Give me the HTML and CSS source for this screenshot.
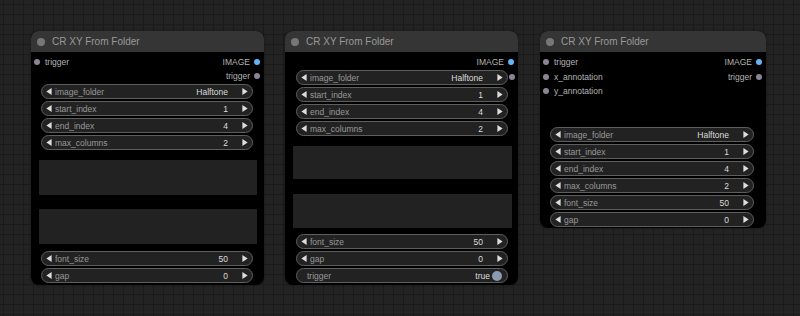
FILE: index.html
```html
<!DOCTYPE html>
<html>
<head>
<meta charset="utf-8">
<link rel="stylesheet" href="styles.css">
</head>
<body>
<div class="canvas">

  <div class="node n1">
    <div class="title"><span class="tdot"></span>CR XY From Folder</div>
    <div class="body">
      <div class="slots">
        <div class="slotrow"><span class="in"><span class="dot"></span>trigger</span><span class="out">IMAGE<span class="dot blue"></span></span></div>
        <div class="slotrow"><span class="in"></span><span class="out">trigger<span class="dot"></span></span></div>
      </div>
      <div class="widgets w1">
        <div class="w"><svg class="la" viewBox="0 0 6 8"><path d="M6 0 L0 4 L6 8 Z"/></svg><span class="lbl">image_folder</span><span class="val">Halftone</span><svg class="ra" viewBox="0 0 6 8"><path d="M0 0 L6 4 L0 8 Z"/></svg></div>
        <div class="w"><svg class="la" viewBox="0 0 6 8"><path d="M6 0 L0 4 L6 8 Z"/></svg><span class="lbl">start_index</span><span class="val">1</span><svg class="ra" viewBox="0 0 6 8"><path d="M0 0 L6 4 L0 8 Z"/></svg></div>
        <div class="w"><svg class="la" viewBox="0 0 6 8"><path d="M6 0 L0 4 L6 8 Z"/></svg><span class="lbl">end_index</span><span class="val">4</span><svg class="ra" viewBox="0 0 6 8"><path d="M0 0 L6 4 L0 8 Z"/></svg></div>
        <div class="w"><svg class="la" viewBox="0 0 6 8"><path d="M6 0 L0 4 L6 8 Z"/></svg><span class="lbl">max_columns</span><span class="val">2</span><svg class="ra" viewBox="0 0 6 8"><path d="M0 0 L6 4 L0 8 Z"/></svg></div>
      </div>
      <div class="ta ta1a"></div>
      <div class="ta ta1b"></div>
      <div class="widgets w1b">
        <div class="w"><svg class="la" viewBox="0 0 6 8"><path d="M6 0 L0 4 L6 8 Z"/></svg><span class="lbl">font_size</span><span class="val">50</span><svg class="ra" viewBox="0 0 6 8"><path d="M0 0 L6 4 L0 8 Z"/></svg></div>
        <div class="w"><svg class="la" viewBox="0 0 6 8"><path d="M6 0 L0 4 L6 8 Z"/></svg><span class="lbl">gap</span><span class="val">0</span><svg class="ra" viewBox="0 0 6 8"><path d="M0 0 L6 4 L0 8 Z"/></svg></div>
      </div>
    </div>
  </div>

  <div class="node n2">
    <div class="title"><span class="tdot"></span>CR XY From Folder</div>
    <div class="body">
      <div class="slots">
        <div class="slotrow"><span class="in"></span><span class="out">IMAGE<span class="dot blue"></span></span></div>
      </div>
      <div class="widgets w2">
        <div class="w"><svg class="la" viewBox="0 0 6 8"><path d="M6 0 L0 4 L6 8 Z"/></svg><span class="lbl">image_folder</span><span class="val">Halftone</span><svg class="ra" viewBox="0 0 6 8"><path d="M0 0 L6 4 L0 8 Z"/></svg><span class="dot sidedot"></span></div>
        <div class="w"><svg class="la" viewBox="0 0 6 8"><path d="M6 0 L0 4 L6 8 Z"/></svg><span class="lbl">start_index</span><span class="val">1</span><svg class="ra" viewBox="0 0 6 8"><path d="M0 0 L6 4 L0 8 Z"/></svg></div>
        <div class="w"><svg class="la" viewBox="0 0 6 8"><path d="M6 0 L0 4 L6 8 Z"/></svg><span class="lbl">end_index</span><span class="val">4</span><svg class="ra" viewBox="0 0 6 8"><path d="M0 0 L6 4 L0 8 Z"/></svg></div>
        <div class="w"><svg class="la" viewBox="0 0 6 8"><path d="M6 0 L0 4 L6 8 Z"/></svg><span class="lbl">max_columns</span><span class="val">2</span><svg class="ra" viewBox="0 0 6 8"><path d="M0 0 L6 4 L0 8 Z"/></svg></div>
      </div>
      <div class="ta ta2a"></div>
      <div class="ta ta2b"></div>
      <div class="widgets w2b">
        <div class="w"><svg class="la" viewBox="0 0 6 8"><path d="M6 0 L0 4 L6 8 Z"/></svg><span class="lbl">font_size</span><span class="val">50</span><svg class="ra" viewBox="0 0 6 8"><path d="M0 0 L6 4 L0 8 Z"/></svg></div>
        <div class="w"><svg class="la" viewBox="0 0 6 8"><path d="M6 0 L0 4 L6 8 Z"/></svg><span class="lbl">gap</span><span class="val">0</span><svg class="ra" viewBox="0 0 6 8"><path d="M0 0 L6 4 L0 8 Z"/></svg></div>
        <div class="w toggle"><span class="lbl">trigger</span><span class="val">true</span><span class="knob"></span></div>
      </div>
    </div>
  </div>

  <div class="node n3">
    <div class="title"><span class="tdot"></span>CR XY From Folder</div>
    <div class="body">
      <div class="slots">
        <div class="slotrow"><span class="in"><span class="dot"></span>trigger</span><span class="out">IMAGE<span class="dot blue"></span></span></div>
        <div class="slotrow r15"><span class="in"><span class="dot"></span>x_annotation</span><span class="out">trigger<span class="dot"></span></span></div>
        <div class="slotrow"><span class="in"><span class="dot"></span>y_annotation</span><span class="out"></span></div>
      </div>
      <div class="widgets w3">
        <div class="w"><svg class="la" viewBox="0 0 6 8"><path d="M6 0 L0 4 L6 8 Z"/></svg><span class="lbl">image_folder</span><span class="val">Halftone</span><svg class="ra" viewBox="0 0 6 8"><path d="M0 0 L6 4 L0 8 Z"/></svg></div>
        <div class="w"><svg class="la" viewBox="0 0 6 8"><path d="M6 0 L0 4 L6 8 Z"/></svg><span class="lbl">start_index</span><span class="val">1</span><svg class="ra" viewBox="0 0 6 8"><path d="M0 0 L6 4 L0 8 Z"/></svg></div>
        <div class="w"><svg class="la" viewBox="0 0 6 8"><path d="M6 0 L0 4 L6 8 Z"/></svg><span class="lbl">end_index</span><span class="val">4</span><svg class="ra" viewBox="0 0 6 8"><path d="M0 0 L6 4 L0 8 Z"/></svg></div>
        <div class="w"><svg class="la" viewBox="0 0 6 8"><path d="M6 0 L0 4 L6 8 Z"/></svg><span class="lbl">max_columns</span><span class="val">2</span><svg class="ra" viewBox="0 0 6 8"><path d="M0 0 L6 4 L0 8 Z"/></svg></div>
        <div class="w"><svg class="la" viewBox="0 0 6 8"><path d="M6 0 L0 4 L6 8 Z"/></svg><span class="lbl">font_size</span><span class="val">50</span><svg class="ra" viewBox="0 0 6 8"><path d="M0 0 L6 4 L0 8 Z"/></svg></div>
        <div class="w"><svg class="la" viewBox="0 0 6 8"><path d="M6 0 L0 4 L6 8 Z"/></svg><span class="lbl">gap</span><span class="val">0</span><svg class="ra" viewBox="0 0 6 8"><path d="M0 0 L6 4 L0 8 Z"/></svg></div>
      </div>
    </div>
  </div>

</div>
</body>
</html>
```

FILE: styles.css
```css
html, body {
  margin: 0;
  padding: 0;
  width: 800px;
  height: 316px;
  overflow: hidden;
}
body {
  background-color: #222222;
  font-family: "Liberation Sans", Arial, sans-serif;
}
.canvas {
  position: relative;
  width: 800px;
  height: 316px;
  background-color: #232323;
  background-image:
    linear-gradient(to right, #1b1b1b 1px, transparent 1px),
    linear-gradient(to bottom, #1b1b1b 1px, transparent 1px);
  background-size: 10px 10px;
  background-position: 3px 4px;
}
.node {
  position: absolute;
  top: 31px;
  display: flex;
  flex-direction: column;
  background: #000;
  border-radius: 8px;
  overflow: hidden;
  box-shadow: 0 0 3px rgba(0,0,0,0.4);
}
.n1 { left: 31px; width: 233px; height: 254px; }
.n2 { left: 285px; width: 233px; height: 254px; }
.n3 { left: 540px; width: 226px; height: 197px; }

.title {
  height: 21px;
  background: #353535;
  color: #999;
  font-size: 10px;
  display: flex;
  align-items: center;
  padding-left: 21px;
  position: relative;
  flex-shrink: 0;
}
.tdot {
  position: absolute;
  left: 6px;
  top: 7px;
  width: 8px;
  height: 8px;
  border-radius: 50%;
  background: #777;
}
.body {
  position: relative;
  flex: 1;
  padding-top: 3px;
}
.slots { display: flex; flex-direction: column; }
.slotrow {
  height: 14px;
  display: flex;
  align-items: center;
  justify-content: space-between;
  font-size: 8.5px;
  color: #b4b4b4;
}
.slotrow.r15 { height: 15px; }
.in { display: flex; align-items: center; padding-left: 3px; }
.in .dot { margin-right: 5px; }
.out { display: flex; align-items: center; padding-right: 4px; }
.out .dot { margin-left: 4px; }
.dot {
  display: inline-block;
  width: 6px;
  height: 6px;
  border-radius: 50%;
  background: #8a8494;
}
.dot.blue { background: #64b5f6; }

.widgets { display: flex; flex-direction: column; gap: 2px; }
.w1 { margin: 1px 11px 0 10px; }
.w1b { margin: 7px 11px 0 10px; }
.w2 { margin: 1px 10px 0 11px; }
.w2b { margin: 6px 10px 0 11px; }
.w3 { margin: 29px 12px 0 10px; }

.w {
  height: 15px;
  box-sizing: border-box;
  border: 1px solid #5e5e5e;
  border-radius: 8px;
  background: #222;
  display: flex;
  align-items: center;
  padding: 0 4px;
  font-size: 8.5px;
  position: relative;
}
.la, .ra { width: 6px; height: 7px; fill: #ddd; flex-shrink: 0; }
.lbl { color: #999; margin-left: 3px; flex: 1; }
.val { color: #ddd; margin-right: 14px; }
.sidedot { position: absolute; right: -8px; top: 3px; }

.toggle { padding: 0 5px 0 10px; }
.toggle .lbl { margin-left: 0; }
.toggle .val { margin-right: 2px; }
.knob {
  width: 10px;
  height: 10px;
  border-radius: 50%;
  background: #8a9bb0;
}

.ta { background: #222; }
.ta1a { margin: 10px 7px 0 8px; height: 35px; }
.ta1b { margin: 14px 7px 0 8px; height: 35px; }
.ta2a { margin: 10px 6px 0 8px; height: 33px; }
.ta2b { margin: 15px 6px 0 8px; height: 34px; }
```
